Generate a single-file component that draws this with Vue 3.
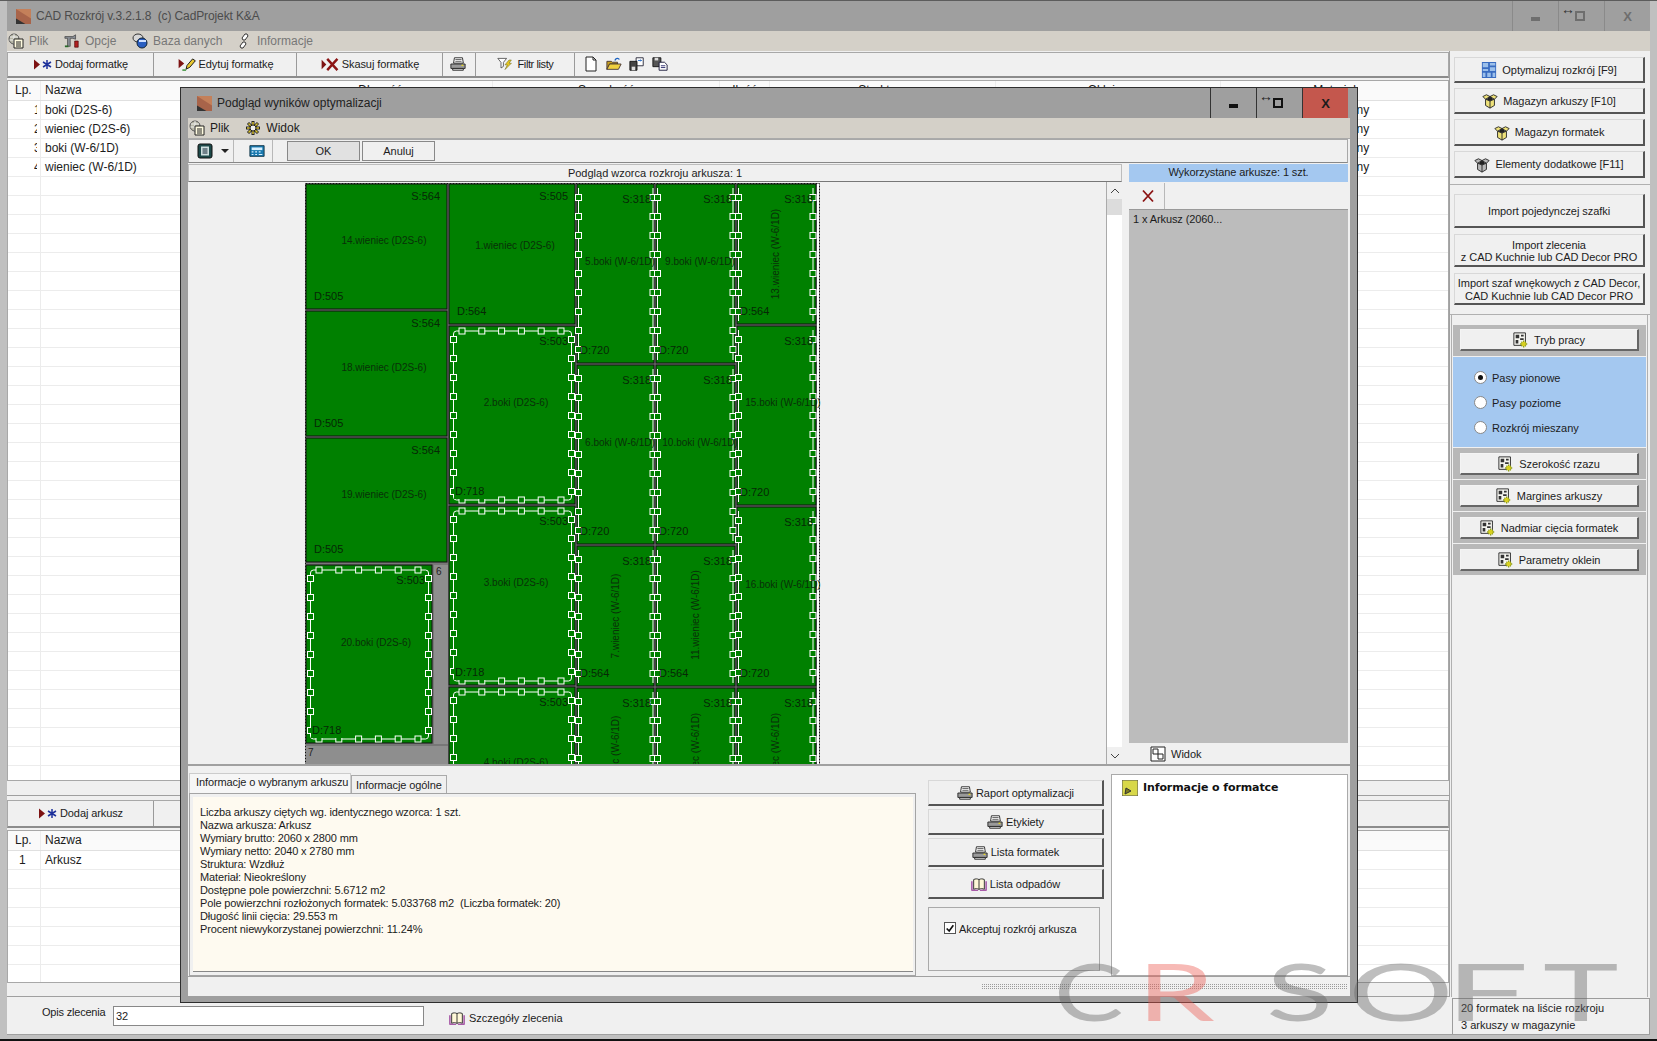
<template>
  <div class="app">
    <!-- shared icons -->
    <svg class="defs" width="0" height="0">
      <symbol id="i-pages" viewBox="0 0 16 16">
        <circle cx="6" cy="6" r="5" fill="#b9b9a8" stroke="#555" />
        <path d="M2 4h8M1.500 7h9M6 1v10" stroke="#eee" fill="none" />
        <path d="M6 6h9v9H6z" fill="#fffbe0" stroke="#222" />
        <path d="M8 9h5M8 11h5M8 13h5" stroke="#222" />
      </symbol>
      <symbol id="i-tools" viewBox="0 0 18 16">
        <path d="M1 3h9l3-2v5l-3-1H7v9H4V5H1z" fill="#8a8f96" stroke="#333" stroke-width=".7" />
        <path d="M12 8h4v7h-4z" fill="#b02020" stroke="#400" stroke-width=".7" />
        <path d="M1 14h4" stroke="#2a6a2a" stroke-width="2" />
      </symbol>
      <symbol id="i-db" viewBox="0 0 16 16">
        <ellipse cx="6" cy="5" rx="5" ry="4" fill="#d8d8d8" stroke="#333" />
        <circle cx="10" cy="10" r="5" fill="#2a5ec0" stroke="#123" />
        <path d="M7 8h7" stroke="#cfe0ff" stroke-width="2" />
      </symbol>
      <symbol id="i-chain" viewBox="0 0 12 16">
        <path d="M7 1h2l1 2-3 4H5L4 5zM5 9h2l1 2-3 4H3L2 13z" fill="#fff" stroke="#333" />
      </symbol>
      <symbol id="i-add" viewBox="0 0 20 12">
        <path d="M1 1l6 5-6 5z" fill="#7d1212" />
        <path d="M14 1.500v9M10 3.500l8 5M18 3.500l-8 5" stroke="#1b2f9a" stroke-width="1.500" />
      </symbol>
      <symbol id="i-edit" viewBox="0 0 20 14">
        <path d="M1 1l6 5-6 5z" fill="#7d1212" />
        <path d="M9 12l1-4 6-7 3 2-6 7z" fill="#e8c830" stroke="#111" />
        <path d="M5 13h4" stroke="#2a8a2a" stroke-width="1.500" />
      </symbol>
      <symbol id="i-del" viewBox="0 0 20 14">
        <path d="M1 2l5 5-5 5z" fill="#7d1212" />
        <path d="M7 1l11 12M18 1L7 13" stroke="#8c1414" stroke-width="2.600" />
      </symbol>
      <symbol id="i-printer" viewBox="0 0 18 16">
        <path d="M5 1h9l1 6H4z" fill="#fff" stroke="#222" />
        <path d="M6 3h7M6 5h7" stroke="#555" />
        <path d="M1 8h16v5H1z" fill="#9a9a9a" stroke="#222" />
        <path d="M3 13h12v2H3z" fill="#ddd" stroke="#222" />
        <path d="M13 9.500h2" stroke="#e8d820" stroke-width="1.500" />
      </symbol>
      <symbol id="i-filter" viewBox="0 0 20 16">
        <path d="M1 1h11L8 6v5L5 13V6z" fill="#fff" stroke="#444" />
        <path d="M15 3l-5 6h3l-3 6 8-8h-3l3-4z" fill="#e8c820" stroke="#5a5a10" stroke-width=".6" />
      </symbol>
      <symbol id="i-new" viewBox="0 0 16 16">
        <path d="M3 1h7l3 3v11H3z" fill="#fff" stroke="#222" />
        <path d="M10 1v3h3" fill="none" stroke="#222" />
      </symbol>
      <symbol id="i-open" viewBox="0 0 18 16">
        <path d="M1 5h5l1 1h6v2H4l-3 6z" fill="#c8a020" stroke="#433" />
        <path d="M1 14l3-6h13l-3 6z" fill="#f0d040" stroke="#433" />
        <path d="M10 4c1-3 4-3 5-1" fill="none" stroke="#1860c0" stroke-width="1.500" />
      </symbol>
      <symbol id="i-import" viewBox="0 0 18 16">
        <path d="M8 1h8v9H8z" fill="#fff" stroke="#223" />
        <path d="M10 4h4l-1-1M14 4l-1 1" stroke="#1860c0" fill="none" />
        <path d="M1 5h8v10H1z" fill="#444" stroke="#111" />
        <path d="M3 11h4v4H3z" fill="#ddd" />
      </symbol>
      <symbol id="i-export" viewBox="0 0 18 16">
        <path d="M1 1h9v10H1z" fill="#555" stroke="#111" />
        <path d="M3 1h4v3H3z" fill="#ddd" />
        <path d="M8 6h6l3 3v6H8z" fill="#fff" stroke="#113" />
        <path d="M10 10h5M10 12h5" stroke="#226" />
      </symbol>
      <symbol id="i-box" viewBox="0 0 18 18">
        <path d="M4 7l5 2 5-2v7l-5 3-5-3z" fill="currentColor" stroke="#222" />
        <path d="M9 9v8" stroke="#222" />
        <path d="M4 7L1 4l4-2 4 2 4-2 4 2-3 3-5-3z" fill="currentColor" stroke="#222" />
        <path d="M5 7l4-3 4 3-4 2z" fill="#222" />
      </symbol>
      <symbol id="i-grid" viewBox="0 0 16 18">
        <path d="M0 0h16v18H0z" fill="#3a6cc0" />
        <path d="M1 1h6v5H1zM9 1h6v3H9zM9 6h6v4H9zM1 8h6v2H1zM1 12h3v5H1zM6 12h4v5H6zM12 12h3v5h-3z" fill="#9cc0ea" />
      </symbol>
      <symbol id="i-sheetgear" viewBox="0 0 18 18">
        <path d="M1 1h13v14H1z" fill="#f5f5f0" stroke="#222" />
        <path d="M3 3h4v4H3zM9 3h3v2H9zM3 9h3v4H3zM8 7h4v2H8z" fill="#333" />
        <path d="M12 9.500v8M8 13.500h8M9.500 11l5 5M14.500 11l-5 5" stroke="#8a9a10" stroke-width="1.500" />
        <circle cx="12" cy="13.500" r="2.500" fill="#d8d020" />
      </symbol>
      <symbol id="i-book" viewBox="0 0 18 16">
        <path d="M3 3c2-1 4-1 6 0 2-1 4-1 6 0v11c-2-1-4-1-6 0-2-1-4-1-6 0z" fill="#fff8d8" stroke="#222" />
        <path d="M9 3v11" stroke="#222" />
        <path d="M1 5v10h7M17 5v10h-7" fill="none" stroke="#902a90" stroke-width="1.300" />
      </symbol>
      <symbol id="i-cog" viewBox="0 0 16 16">
        <path d="M8 1v14M1 8h14M3 3l10 10M13 3L3 13" stroke="#222" stroke-width="3" />
        <path d="M8 2v12M2 8h12M3.500 3.500l9 9M12.500 3.500l-9 9" stroke="#d8c030" stroke-width="1.500" />
        <circle cx="8" cy="8" r="3" fill="#eee" stroke="#222" />
      </symbol>
      <symbol id="i-panel" viewBox="0 0 16 16">
        <rect x="1" y="1" width="14" height="14" rx="2" fill="#1e4a4a" stroke="#111" />
        <path d="M4 3.500h8v9H4z" fill="#cfe0e0" />
        <path d="M5.500 6h5M5.500 8h5M5.500 10h5" stroke="#123" />
      </symbol>
      <symbol id="i-calc" viewBox="0 0 18 14">
        <path d="M1 1h16v12H1z" fill="#1a7ab0" stroke="#134" />
        <path d="M3 3h12v3H3z" fill="#d8f0ff" />
        <path d="M3 8h2M7 8h2M11 8h2M3 11h2M7 11h2M11 11h4" stroke="#d8f0ff" stroke-width="1.200" />
      </symbol>
      <symbol id="i-view" viewBox="0 0 16 16">
        <path d="M1 1h14v14H1z" fill="#fff" stroke="#222" />
        <path d="M3 3h5v5H3zM8 8h5v5H8z" fill="#fff" stroke="#222" />
      </symbol>
      <symbol id="i-note" viewBox="0 0 16 16">
        <path d="M0 0h16v16H0z" fill="#d8d84a" stroke="#555" />
        <path d="M3 14l1-6 5 3z" fill="#7a7a20" stroke="#333" />
      </symbol>
      <symbol id="i-x" viewBox="0 0 14 14">
        <path d="M2 1.500l10 11M12 1.500l-10 11" stroke="#8c1414" stroke-width="1.800" />
      </symbol>
    </svg>

    <header class="titlebar">
      <svg class="logo" viewBox="0 0 16 16"><rect width="16" height="16" fill="#a8644a" /><path d="M0 10l10 6H0z" fill="#333" /><path d="M0 0l16 10V0z" fill="#c4805a" /></svg>
      <span class="app-title">CAD Rozkrój v.3.2.1.8&nbsp; (c) CadProjekt K&amp;A</span>
      <div class="winbtns dim">
        <span class="wb"><i class="wb-min"></i></span>
        <span class="wb wb-max"><small>↔</small><i class="wb-sq"></i></span>
        <span class="wb wb-x">X</span>
      </div>
    </header>

    <nav class="menu dimmed">
      <span class="mi"><svg class="ic"><use href="#i-pages" /></svg>Plik</span>
      <span class="mi"><svg class="ic"><use href="#i-tools" /></svg>Opcje</span>
      <span class="mi"><svg class="ic"><use href="#i-db" /></svg>Baza danych</span>
      <span class="mi"><svg class="ic ic-s"><use href="#i-chain" /></svg>Informacje</span>
    </nav>

    <div class="body">
      <main class="main">
        <div class="toolbar top-tb">
          <span class="tb w146"><svg class="ic-w"><use href="#i-add" /></svg>Dodaj formatkę</span>
          <span class="tb w143"><svg class="ic-w"><use href="#i-edit" /></svg>Edytuj formatkę</span>
          <span class="tb w146"><svg class="ic-w"><use href="#i-del" /></svg>Skasuj formatkę</span>
          <span class="tb w33"><svg class="ic"><use href="#i-printer" /></svg></span>
          <span class="tb w99 filtr"><svg class="ic"><use href="#i-filter" /></svg>Filtr listy</span>
          <span class="tb-icons">
            <svg class="ic"><use href="#i-new" /></svg>
            <svg class="ic"><use href="#i-open" /></svg>
            <svg class="ic"><use href="#i-import" /></svg>
            <svg class="ic"><use href="#i-export" /></svg>
          </span>
        </div>

        <div class="table table-top">
          <div class="row head">
            <span class="c lp">Lp.</span><span class="c nm">Nazwa</span>
            <span v-for="h in headCols" :key="h" class="c num">{{ h }}</span>
          </div>
          <div v-for="(r, i) in formatRows" :key="i" class="row">
            <span class="c lp"><b class="clip">{{ r.lp }}</b></span>
            <span class="c nm">{{ r.name }}</span>
            <span v-for="h in headCols" :key="h" class="c num">{{ r.name && h === 'Materiał' ? 'Nieokreślony' : '' }}</span>
          </div>
        </div>
        <div class="strip s1"></div>

        <div class="toolbar sheet-tb">
          <span class="tb w146"><svg class="ic-w"><use href="#i-add" /></svg>Dodaj arkusz</span>
        </div>

        <div class="table table-low">
          <div class="row head">
            <span class="c lp">Lp.</span><span class="c nm">Nazwa</span>
          </div>
          <div class="row"><span class="c lp lp1">1</span><span class="c nm">Arkusz</span></div>
          <div v-for="i in 6" :key="i" class="row"><span class="c lp"></span><span class="c nm"></span></div>
        </div>
        <div class="strip s2"></div>
      </main>

      <aside class="side">
        <section class="side-a">
          <button class="btn h26"><svg class="ic"><use href="#i-grid" /></svg>Optymalizuj rozkrój [F9]</button>
          <button class="btn h26"><svg class="ic y"><use href="#i-box" /></svg>Magazyn arkuszy [F10]</button>
          <button class="btn h27"><svg class="ic y"><use href="#i-box" /></svg>Magazyn formatek</button>
          <button class="btn h27"><svg class="ic g"><use href="#i-box" /></svg>Elementy dodatkowe [F11]</button>
        </section>
        <section class="side-b">
          <button class="btn h34">Import pojedynczej szafki</button>
          <button class="btn h33">Import zlecenia<br />z CAD Kuchnie lub CAD Decor PRO</button>
          <button class="btn h32">Import szaf wnękowych z CAD Decor,<br />CAD Kuchnie lub CAD Decor PRO</button>
        </section>
        <section class="side-c">
          <div class="gstrip first"><button class="btn h22"><svg class="ic"><use href="#i-sheetgear" /></svg>Tryb pracy</button></div>
          <div class="modes">
            <label v-for="m in modes" :key="m.t" class="mode"><span class="radio" :class="{ on: m.on }"></span>{{ m.t }}</label>
          </div>
          <div v-for="b in sideBtns" :key="b" class="gstrip"><button class="btn h22"><svg class="ic"><use href="#i-sheetgear" /></svg>{{ b }}</button></div>
        </section>
      </aside>
    </div>

    <footer class="foot">
      <span class="opis">Opis zlecenia</span>
      <span class="input">32</span>
      <span class="details"><svg class="ic"><use href="#i-book" /></svg>Szczegóły zlecenia</span>
      <div class="stat">20 formatek na liście rozkroju<br />3 arkuszy w magazynie</div>
    </footer>
    <div class="edge"></div>

    <!-- okno dialogowe -->
    <div class="dlg">
      <div class="dlg-title">
        <svg class="logo" viewBox="0 0 16 16"><rect width="16" height="16" fill="#a8644a" /><path d="M0 10l10 6H0z" fill="#333" /><path d="M0 0l16 10V0z" fill="#c4805a" /></svg>
        <span>Podgląd wyników optymalizacji</span>
        <div class="winbtns">
          <span class="wb"><i class="wb-min"></i></span>
          <span class="wb wb-max"><small>↔</small><i class="wb-sq"></i></span>
          <span class="wb wb-x red">X</span>
        </div>
      </div>
      <div class="dlg-body">
        <nav class="dlg-menu">
          <span class="mi"><svg class="ic"><use href="#i-pages" /></svg>Plik</span>
          <span class="mi"><svg class="ic"><use href="#i-cog" /></svg>Widok</span>
        </nav>
        <div class="dlg-tb">
          <svg class="ic tb-panel"><use href="#i-panel" /></svg>
          <i class="caret"></i>
          <i class="vsep"></i>
          <svg class="ic tb-calc"><use href="#i-calc" /></svg>
          <i class="vsep"></i>
          <span class="flat ok">OK</span>
          <span class="flat">Anuluj</span>
        </div>

        <div class="work">
          <div class="work-left">
            <div class="work-head">Podgląd wzorca rozkroju arkusza: 1</div>
            <div class="stage-row">
              <svg class="stage" viewBox="188 182 918 582" width="918" height="582">
                <rect x="305.500" y="183.500" width="514" height="590" fill="#fff" stroke="#111" stroke-dasharray="2 1" />
                <rect x="306" y="184" width="511" height="590" fill="#777" />
                <g v-for="p in pieces" :key="p.name">
                  <rect :x="p.x" :y="p.y" :width="p.w - 1" :height="p.h - 1" fill="#008000" stroke="#111" />
                  <rect v-if="p.kind === 'all'" :x="p.x + 4.500" :y="p.y + 5" :width="p.w - 9" :height="p.h - 10" rx="3" fill="none" stroke="#fff" />
                  <path v-if="p.kind === 'side'" :d="`M${p.x + 1.500} ${p.y + 4}V${p.y + p.h - 4}M${rightOf(p)} ${p.y + 4}V${p.y + p.h - 4}`" stroke="#fff" />
                  <rect v-for="(h, i) in handles(p)" :key="i" :x="h[0] - 3" :y="h[1] - 3" width="6" height="6" fill="#008000" stroke="#fff" />
                  <rect v-if="p.kind === 'all'" :x="p.x + 5" :y="p.y + p.h - 19" width="34" height="13" fill="#008000" />
                </g>
                <g v-for="p in pieces" :key="'t' + p.name">
                  <text class="dim-t" :x="p.x + p.w - (p.kind === 'side' ? 4 : 8)" :y="p.y + (p.kind === 'plain' ? 13 : 16)" text-anchor="end" dominant-baseline="middle">{{ p.s }}</text>
                  <text class="dim-t" :x="p.x + (p.kind === 'side' ? 3 : p.kind === 'all' ? 6 : 8)" :y="p.y + p.h - 12.500" dominant-baseline="middle">{{ p.d }}</text>
                  <text class="name-t" :x="p.nx" :y="p.ny" text-anchor="middle" dominant-baseline="middle" :transform="p.rot ? `rotate(-90 ${p.nx} ${p.ny})` : null">{{ p.name }}</text>
                </g>
                <rect x="434" y="565" width="14" height="179" fill="#8e8e8e" />
                <text class="scrap-t" x="436" y="572" dominant-baseline="middle">6</text>
                <rect x="306" y="746" width="142" height="30" fill="#8e8e8e" />
                <text class="scrap-t" x="308" y="753" dominant-baseline="middle">7</text>
              </svg>
              <div class="vscroll">
                <span class="sb-btn">
                  <svg viewBox="0 0 10 6" width="10" height="6"><path d="M1 5l4-4 4 4" fill="none" stroke="#444" /></svg>
                </span>
                <i class="sb-thumb"></i>
                <i class="sb-track"></i>
                <span class="sb-btn">
                  <svg viewBox="0 0 10 6" width="10" height="6"><path d="M1 1l4 4 4-4" fill="none" stroke="#444" /></svg>
                </span>
              </div>
            </div>
          </div>
          <div class="work-right">
            <div class="used-head">Wykorzystane arkusze: 1 szt.</div>
            <div class="used-tb"><svg class="ic-x"><use href="#i-x" /></svg><i class="vsep tall"></i></div>
            <div class="used-list">1 x Arkusz (2060...</div>
            <div class="used-view"><svg class="ic"><use href="#i-view" /></svg>Widok</div>
          </div>
        </div>

        <div class="lower">
          <div class="tabs-wrap">
            <div class="tabs">
              <span class="tab active">Informacje o wybranym arkuszu</span>
              <span class="tab">Informacje ogólne</span>
            </div>
            <div class="tab-panel">
              <div class="info">
                <div v-for="l in infoLines" :key="l">{{ l }}</div>
              </div>
            </div>
          </div>
          <div class="actions">
            <button class="btn a26"><svg class="ic"><use href="#i-printer" /></svg>Raport optymalizacji</button>
            <button class="btn a26"><svg class="ic"><use href="#i-printer" /></svg>Etykiety</button>
            <button class="btn a29"><svg class="ic"><use href="#i-printer" /></svg>Lista formatek</button>
            <button class="btn a30"><svg class="ic"><use href="#i-book" /></svg>Lista odpadów</button>
            <div class="accept">
              <span class="check"><svg viewBox="0 0 12 12" width="11" height="11"><path d="M2 6l3 3 5-7" fill="none" stroke="#111" stroke-width="2" /></svg></span>
              Akceptuj rozkrój arkusza
            </div>
          </div>
          <div class="piece-info">
            <svg class="ic"><use href="#i-note" /></svg>
            <b>Informacje o formatce</b>
          </div>
        </div>
        <div class="dlg-status"><i class="dots"></i></div>
      </div>
    </div>

    <span
      v-for="l in watermark"
      :key="l.c"
      class="wm"
      :class="{ 'wm-r': l.c === 'R' }"
      :style="{ left: l.left + 'px', transform: `scaleX(${l.sx})` }"
    >{{ l.c }}</span>
  </div>
</template>

<script setup>
const headCols = ['Długość', 'Szerokość', 'Ilość', 'Struktura', 'Okleina', 'Materiał']

const names = ['boki (D2S-6)', 'wieniec (D2S-6)', 'boki (W-6/1D)', 'wieniec (W-6/1D)']
const formatRows = Array.from({ length: 36 }, (_, i) => ({
  lp: names[i] ? i + 1 : '',
  name: names[i] || ''
}))

const modes = [
  { t: 'Pasy pionowe', on: true },
  { t: 'Pasy poziome', on: false },
  { t: 'Rozkrój mieszany', on: false }
]
const sideBtns = ['Szerokość rzazu', 'Margines arkuszy', 'Nadmiar cięcia formatek', 'Parametry oklein']

const infoLines = [
  'Liczba arkuszy ciętych wg. identycznego wzorca: 1 szt.',
  'Nazwa arkusza: Arkusz',
  'Wymiary brutto: 2060 x 2800 mm',
  'Wymiary netto: 2040 x 2780 mm',
  'Struktura: Wzdłuż',
  'Materiał: Nieokreślony',
  'Dostępne pole powierzchni: 5.6712 m2',
  'Pole powierzchni rozłożonych formatek: 5.033768 m2  (Liczba formatek: 20)',
  'Długość linii cięcia: 29.553 m',
  'Procent niewykorzystanej powierzchni: 11.24%'
]

const watermark = [
  { c: 'C', left: 1054, sx: 1.3 },
  { c: 'R', left: 1137, sx: 1.55 },
  { c: 'S', left: 1266, sx: 1.55 },
  { c: 'O', left: 1348, sx: 1.65 },
  { c: 'F', left: 1445, sx: 1.85 },
  { c: 'T', left: 1543, sx: 1.6 }
]

// formatki na arkuszu, wspolrzedne jak na ekranie
const pieces = [
  { x: 306, y: 184, w: 142, h: 126, kind: 'plain', s: 'S:564', d: 'D:505', name: '14.wieniec (D2S-6)', nx: 384, ny: 241 },
  { x: 306, y: 311, w: 142, h: 126, kind: 'plain', s: 'S:564', d: 'D:505', name: '18.wieniec (D2S-6)', nx: 384, ny: 368 },
  { x: 306, y: 438, w: 142, h: 125, kind: 'plain', s: 'S:564', d: 'D:505', name: '19.wieniec (D2S-6)', nx: 384, ny: 495 },
  { x: 306, y: 565, w: 127, h: 179, kind: 'all', s: 'S:503', d: 'D:718', name: '20.boki (D2S-6)', nx: 376, ny: 643 },
  { x: 449, y: 184, w: 127, h: 141, kind: 'plain', s: 'S:505', d: 'D:564', name: '1.wieniec (D2S-6)', nx: 515, ny: 246 },
  { x: 449, y: 326, w: 127, h: 179, kind: 'all', s: 'S:503', d: 'D:718', name: '2.boki (D2S-6)', nx: 516, ny: 403 },
  { x: 449, y: 506, w: 127, h: 180, kind: 'all', s: 'S:503', d: 'D:718', name: '3.boki (D2S-6)', nx: 516, ny: 583 },
  { x: 449, y: 687, w: 127, h: 180, kind: 'all', s: 'S:503', d: 'D:718', name: '4.boki (D2S-6)', nx: 516, ny: 763 },
  { x: 577, y: 184, w: 78, h: 180, kind: 'side', s: 'S:318', d: 'D:720', name: '5.boki (W-6/1D)', nx: 620, ny: 262 },
  { x: 577, y: 365, w: 78, h: 180, kind: 'side', s: 'S:318', d: 'D:720', name: '6.boki (W-6/1D)', nx: 620, ny: 443 },
  { x: 577, y: 546, w: 78, h: 141, kind: 'side', s: 'S:318', d: 'D:564', name: '7.wieniec (W-6/1D)', nx: 616, ny: 616, rot: true },
  { x: 577, y: 688, w: 78, h: 141, kind: 'side', s: 'S:318', d: 'D:564', name: '8.wieniec (W-6/1D)', nx: 616, ny: 758, rot: true },
  { x: 656, y: 184, w: 80, h: 180, kind: 'side', s: 'S:318', d: 'D:720', name: '9.boki (W-6/1D)', nx: 700, ny: 262 },
  { x: 656, y: 365, w: 80, h: 180, kind: 'side', s: 'S:318', d: 'D:720', name: '10.boki (W-6/1D)', nx: 700, ny: 443 },
  { x: 656, y: 546, w: 80, h: 141, kind: 'side', s: 'S:318', d: 'D:564', name: '11.wieniec (W-6/1D)', nx: 696, ny: 615, rot: true },
  { x: 656, y: 688, w: 80, h: 141, kind: 'side', s: 'S:318', d: 'D:564', name: '12.wieniec (W-6/1D)', nx: 696, ny: 758, rot: true },
  { x: 737, y: 184, w: 80, h: 141, kind: 'side', s: 'S:318', d: 'D:564', name: '13.wieniec (W-6/1D)', nx: 776, ny: 254, rot: true },
  { x: 737, y: 326, w: 80, h: 180, kind: 'side', s: 'S:318', d: 'D:720', name: '15.boki (W-6/1D)', nx: 783, ny: 403 },
  { x: 737, y: 507, w: 80, h: 180, kind: 'side', s: 'S:318', d: 'D:720', name: '16.boki (W-6/1D)', nx: 783, ny: 585 },
  { x: 737, y: 688, w: 80, h: 141, kind: 'side', s: 'S:318', d: 'D:564', name: '17.wieniec (W-6/1D)', nx: 776, ny: 758, rot: true }
]

function rightOf(p) {
  if (p.x > 730) return p.x + p.w - 4
  if (p.x > 650) return p.x + p.w - 3
  return p.x + p.w - 2
}

function handles(p) {
  if (p.kind === 'plain') return []
  const out = []
  const lx = p.kind === 'all' ? p.x + 4.5 : p.x + 1.5
  const rx = p.kind === 'all' ? p.x + p.w - 4.5 : rightOf(p)
  for (let y = p.y + 13.5; y < p.y + p.h - 8; y += 19) {
    out.push([lx, y], [rx, y])
  }
  if (p.kind === 'all') {
    for (let i = 0; i < 6; i++) {
      const x = p.x + 13 + i * 19.8
      out.push([x, p.y + 5], [x, p.y + p.h - 5])
    }
  }
  return out
}
</script>

<style scoped>
.app {
  position: relative;
  width: 1657px;
  height: 1041px;
  box-sizing: border-box;
  padding: 0 7px;
  overflow: hidden;
  background: #c0c0c0;
  border-top: 1px solid #5c5c5c;
  border-bottom: 2px solid #111;
  display: flex;
  flex-direction: column;
  font: 12px "Liberation Sans", Arial, sans-serif;
  color: #1c1c1c;
}
.defs { position: absolute; }
.ic { width: 16px; height: 16px; flex: none; margin-right: 5px; }
.ic-s { width: 12px; }
.ic-w { width: 20px; height: 13px; flex: none; margin-right: 0; }
.ic-x { width: 14px; height: 14px; }
.y { color: #efe27a; }
.g { color: #b8b8b8; }

.titlebar {
  height: 30px;
  flex: none;
  background: #9f9f9f;
  display: flex;
  align-items: center;
  padding-left: 9px;
  color: #4c4c4c;
}
.logo { width: 15px; height: 15px; margin-right: 5px; flex: none; }
.app-title { letter-spacing: -0.12px; }
.winbtns { margin-left: auto; display: flex; height: 100%; }
.wb {
  width: 46px;
  box-sizing: border-box;
  border-left: 1px solid #333;
  display: flex;
  align-items: center;
  justify-content: center;
  position: relative;
  font-weight: bold;
  font-size: 13px;
}
.wb-x { color: #1c1c1c; }
.wb-min { width: 9px; height: 4px; background: #111; margin-top: 5px; }
.wb-sq { width: 6px; height: 6px; border: 2px solid #111; display: block; margin-left: -4px; }
.wb small { position: absolute; left: 2px; top: 1px; font-size: 14px; line-height: 14px; color: #222; }
.red { background: #c4574d; }
.dim .wb { border-left-color: #8a8a8a; color: #6e6e6e; }
.dim .wb-min { background: #6e6e6e; }
.dim .wb-sq { border-color: #6e6e6e; }
.dim small { color: #333; }

.menu {
  height: 20px;
  flex: none;
  background: #d4d0c8;
  display: flex;
  align-items: center;
  color: #777;
}
.mi { display: inline-flex; align-items: center; }
.menu .mi:nth-child(1) { margin-left: 1px; width: 56px; }
.menu .mi:nth-child(1) .ic { margin-right: 5px; }
.menu .mi:nth-child(2) { width: 68px; }
.menu .mi:nth-child(3) { width: 106px; }
.menu .mi:nth-child(4) .ic { margin-right: 7px; }

.body { height: 946px; flex: none; display: flex; background: #f0f0f0; }
.main { width: 1442px; flex: none; display: flex; flex-direction: column; }

.toolbar {
  box-sizing: border-box;
  display: flex;
  align-items: center;
  border: 1px solid #a8a8a8;
  border-bottom: 2px solid #8c8c8c;
  background: #f0f0f0;
}
.top-tb { height: 26px; margin-top: 1px; }
.sheet-tb { height: 28px; margin-top: 4px; }
.tb {
  height: 100%;
  box-sizing: border-box;
  display: inline-flex;
  align-items: center;
  justify-content: center;
  border-right: 1px solid #9a9a9a;
  font-size: 11px;
  letter-spacing: -0.1px;
}
.tb .ic-w { margin-right: 2px; }
.tb .ic { margin-right: 3px; }
.filtr { letter-spacing: -0.4px; }
.filtr .ic { margin-right: 5px; }
.w146 { width: 146px; }
.w143 { width: 143px; }
.w33 { width: 33px; }
.w99 { width: 99px; }
.tb-icons { display: inline-flex; padding-left: 8px; gap: 7px; }
.tb-icons .ic { margin: 0; }

.table { background: #fff; border: 1px solid #a8a8a8; box-sizing: border-box; overflow: hidden; }
.table-top { height: 703px; margin-top: 2px; }
.table-low { height: 154px; margin-top: 2px; }
.strip { box-sizing: border-box; border-bottom: 1px solid #a0a0a0; }
.s1 { height: 15px; }
.s2 { height: 14px; }
.row {
  display: grid;
  grid-template-columns: 33px 227px 225px 227px 50px 226px 225px 228px;
  height: 19px;
  box-sizing: border-box;
  border-bottom: 1px solid #ececec;
}
.head { height: 20px; background: #fafafa; border-bottom: 1px solid #e0e0e0; }
.c { padding-left: 4px; line-height: 18px; white-space: nowrap; overflow: hidden; }
.lp { padding-left: 7px; border-right: 1px solid #ececec; }
.row:not(.head) .lp { padding-left: 26px; }
.row:not(.head) .lp1 { padding-left: 11px; }
.clip { display: block; width: 3px; overflow: hidden; font-weight: normal; }
.num { text-align: center; padding: 0; border-right: 1px solid #ececec; }
.table-low .row { grid-template-columns: 33px 1fr; }

.side { width: 201px; flex: none; box-sizing: border-box; display: flex; flex-direction: column; border-left: 1px solid #a0a0a0; }
.btn {
  display: flex;
  align-items: center;
  justify-content: center;
  box-sizing: border-box;
  width: 100%;
  padding: 1px 0 0;
  background: #f0f0f0;
  border-style: solid;
  border-width: 1px 2px 2px 1px;
  border-color: #d8d8d8 #555 #555 #d8d8d8;
  font: 11px/13px "Liberation Sans", Arial, sans-serif;
  color: #1c1c1c;
  text-align: center;
  letter-spacing: -0.05px;
}
.h26 { height: 26px; }
.h27 { height: 27px; }
.h34 { height: 34px; }
.h33 { height: 33px; }
.h32 { height: 32px; }
.h22 { height: 22px; }
.side-a { display: flex; flex-direction: column; gap: 5px; padding: 6px 5px 6px 4px; border-bottom: 1px solid #b0b0b0; }
.side-b { display: flex; flex-direction: column; gap: 6px; padding: 9px 5px 9px 4px; border-bottom: 1px solid #b0b0b0; }
.side-b .h32 { display: block; padding-top: 2px; }
.side-b .h33 { display: block; padding-top: 2px; line-height: 12px; }
.side-c { flex: 1; margin: 0 2px 0 1px; padding: 10px 1px 0; border: 1px solid #b0b0b0; border-top: 0; border-bottom: 0; display: flex; flex-direction: column; gap: 1px; }
.gstrip { height: 31px; flex: none; background: #b8b8b8; padding: 5px 7px 0; box-sizing: border-box; }
.gstrip.first { padding-top: 4px; }
.gstrip .btn { border-color: #f4f4f4 #666 #666 #f4f4f4; }
.modes { height: 90px; flex: none; background: #a4c8f0; display: flex; flex-direction: column; padding: 14px 0 0 21px; box-sizing: border-box; gap: 12px; }
.mode { display: flex; align-items: center; font-size: 11px; height: 13px; }
.radio {
  width: 11px;
  height: 11px;
  border-radius: 50%;
  border: 1px solid #888;
  background: #fff;
  margin-right: 5px;
  position: relative;
}
.radio.on::after {
  content: "";
  position: absolute;
  left: 3px;
  top: 3px;
  width: 5px;
  height: 5px;
  border-radius: 50%;
  background: #111;
}

.foot {
  height: 38px;
  flex: none;
  box-sizing: border-box;
  background: #f0f0f0;
  display: flex;
  align-items: flex-start;
  border-bottom: 1px solid #a0a0a0;
  font-size: 11px;
}
.opis { margin: 9px 6px 0 35px; width: 65px; flex: none; white-space: nowrap; letter-spacing: -0.2px; }
.input {
  width: 311px;
  height: 20px;
  margin-top: 9px;
  box-sizing: border-box;
  border: 1px solid #888;
  background: #fff;
  padding: 3px 2px;
  flex: none;
}
.details { display: flex; align-items: center; margin: 13px 0 0 25px; }
.details .ic { margin-right: 4px; }
.stat {
  margin: 1px 0 0 auto;
  width: 198px;
  height: 36px;
  box-sizing: border-box;
  border: 1px solid #9c9c9c;
  border-width: 1px 1px 0 1px;
  padding: 1px 8px;
  line-height: 17px;
}
.edge { flex: 1; background: #c0c0c0; }

/* dialog */
.dlg {
  position: absolute;
  left: 180px;
  top: 86px;
  width: 1178px;
  height: 916px;
  box-sizing: border-box;
  border: 1px solid #2e2e2e;
  background: #9f9f9f;
  display: flex;
  flex-direction: column;
  color: #1c1c1c;
}
.dlg-title {
  height: 30px;
  flex: none;
  display: flex;
  align-items: center;
  padding-left: 16px;
  color: #222;
}
.dlg-title .winbtns { margin-right: 9px; }
.dlg-body { flex: 1; margin: 0 7px 6px; background: #f0f0f0; display: flex; flex-direction: column; min-height: 0; }
.dlg-menu { height: 21px; flex: none; background: #d4d0c8; display: flex; align-items: center; padding-left: 1px; border-bottom: 1px solid #aaa; box-sizing: border-box; }
.dlg-menu .mi { margin-right: 16px; }
.dlg-tb { height: 24px; flex: none; display: flex; align-items: center; box-sizing: border-box; border: 1px solid #a8a8a8; margin-right: 2px; border-bottom: 1px solid #888; }
.tb-panel { margin: 0 0 0 8px; width: 16px; }
.caret { width: 0; height: 0; border: 4px solid transparent; border-top-color: #222; border-bottom: 0; margin: 0 4px 0 8px; }
.vsep { width: 1px; height: 22px; background: #b8b8b8; flex: none; }
.tall { height: 26px; margin-left: 9px; }
.tb-calc { margin: 0 7px 0 15px; height: 14px; width: 16px; }
.flat { width: 73px; height: 20px; box-sizing: border-box; border: 1px solid #888; background: #f0f0f0; display: inline-flex; align-items: center; justify-content: center; font-size: 11px; margin-right: 2px; }
.flat.ok { background: #e1e1e1; margin-left: 14px; }

.work { height: 600px; flex: none; margin-top: 1px; display: flex; }
.work-left { width: 934px; flex: none; display: flex; flex-direction: column; }
.work-head { height: 18px; box-sizing: border-box; flex: none; border: 1px solid #bdbdbd; border-bottom: 1px solid #777; text-align: center; line-height: 17px; font-size: 11px; }
.stage-row { flex: 1; display: flex; min-height: 0; }
.stage { display: block; flex: none; background: #f0f0f0; }
.dim-t { font: 11px "Liberation Sans", Arial, sans-serif; fill: #062806; }
.name-t { font: 10px "Liberation Sans", Arial, sans-serif; fill: #083008; }
.scrap-t { font: 10px "Liberation Sans", Arial, sans-serif; fill: #222; }
.vscroll { width: 16px; flex: none; display: flex; flex-direction: column; background: #fff; border-left: 1px solid #aaa; box-sizing: border-box; }
.sb-btn { height: 17px; flex: none; background: #f0f0f0; display: flex; align-items: center; justify-content: center; }
.sb-thumb { height: 16px; background: #dcdcdc; flex: none; }
.sb-track { flex: 1; }
.work-right { width: 219px; margin-left: 7px; flex: none; display: flex; flex-direction: column; }
.used-head { height: 18px; flex: none; background: #a4c8f0; text-align: center; line-height: 17px; font-size: 11px; letter-spacing: -0.1px; }
.used-tb { height: 28px; flex: none; display: flex; align-items: center; padding-left: 12px; box-sizing: border-box; border-bottom: 1px solid #999; }
.used-list { flex: 1; background: #bcbcbc; padding: 2px 4px; font-size: 11px; line-height: 14px; letter-spacing: -0.1px; }
.used-view { height: 21px; flex: none; display: flex; align-items: center; font-size: 11px; padding-left: 21px; }

.lower { height: 212px; flex: none; display: flex; border-top: 2px solid #a0a0a0; box-sizing: border-box; padding-top: 6px; }
.tabs-wrap { width: 727px; margin: 1px 0 0 1px; flex: none; display: flex; flex-direction: column; }
.tabs { height: 20px; flex: none; display: flex; align-items: flex-end; font-size: 11px; letter-spacing: -0.1px; }
.tab { height: 18px; box-sizing: border-box; border: 1px solid #aaa; border-bottom: 0; padding: 0 4px; line-height: 18px; white-space: nowrap; background: #f0f0f0; }
.tab.active { height: 20px; width: 162px; border-color: #ccc; background: #f6f6f6; padding: 0 2px 0 6px; line-height: 17px; }
.tab-panel { flex: 1; box-sizing: border-box; border: 1px solid #a4a4a4; padding: 3px 2px 3px 3px; }
.info { height: 100%; box-sizing: border-box; background: #fefaf0; border-bottom: 1px solid #888; padding: 9px 0 0 7px; font-size: 11px; line-height: 13px; white-space: pre; letter-spacing: -0.14px; }
.actions { width: 176px; flex: none; margin: 8px 0 0 12px; display: flex; flex-direction: column; gap: 3px; }
.actions .ic { margin-right: 3px; }
.a26 { height: 26px; }
.a29 { height: 29px; }
.a30 { height: 30px; margin-top: -1px; }
.accept { margin-top: 5px; width: 172px; height: 64px; box-sizing: border-box; border: 1px solid #aaa; padding: 14px 0 0 15px; display: flex; align-items: flex-start; font-size: 11px; gap: 3px; line-height: 14px; letter-spacing: -0.1px; }
.check { width: 12px; height: 12px; box-sizing: border-box; border: 1px solid #555; background: #fff; display: inline-flex; align-items: center; justify-content: center; }
.piece-info { width: 237px; margin: 2px 0 0 7px; flex: none; background: #fff; border: 1px solid #aaa; box-sizing: border-box; padding: 5px 0 0 10px; display: flex; align-items: flex-start; }
.piece-info b { font: bold 11px/16px "DejaVu Sans", sans-serif; letter-spacing: -0.1px; color: #111; }
.dlg-status { height: 20px; flex: none; border-top: 1px solid #a0a0a0; display: flex; justify-content: flex-end; align-items: center; box-sizing: border-box; padding-right: 3px; }
.dots {
  width: 365px;
  height: 6px;
  background:
    repeating-linear-gradient(0deg, #f0f0f0 0 1px, transparent 1px 2px),
    repeating-linear-gradient(90deg, #9a9a9a 0 1px, transparent 1px 2px);
}

.wm {
  position: absolute;
  top: 949px;
  font: 400 80px/80px Lato, "Liberation Sans", Arial, sans-serif;
  color: rgba(100, 100, 100, 0.42);
  transform-origin: left top;
  pointer-events: none;
}
.wm-r { color: rgba(235, 90, 80, 0.42); }
</style>
